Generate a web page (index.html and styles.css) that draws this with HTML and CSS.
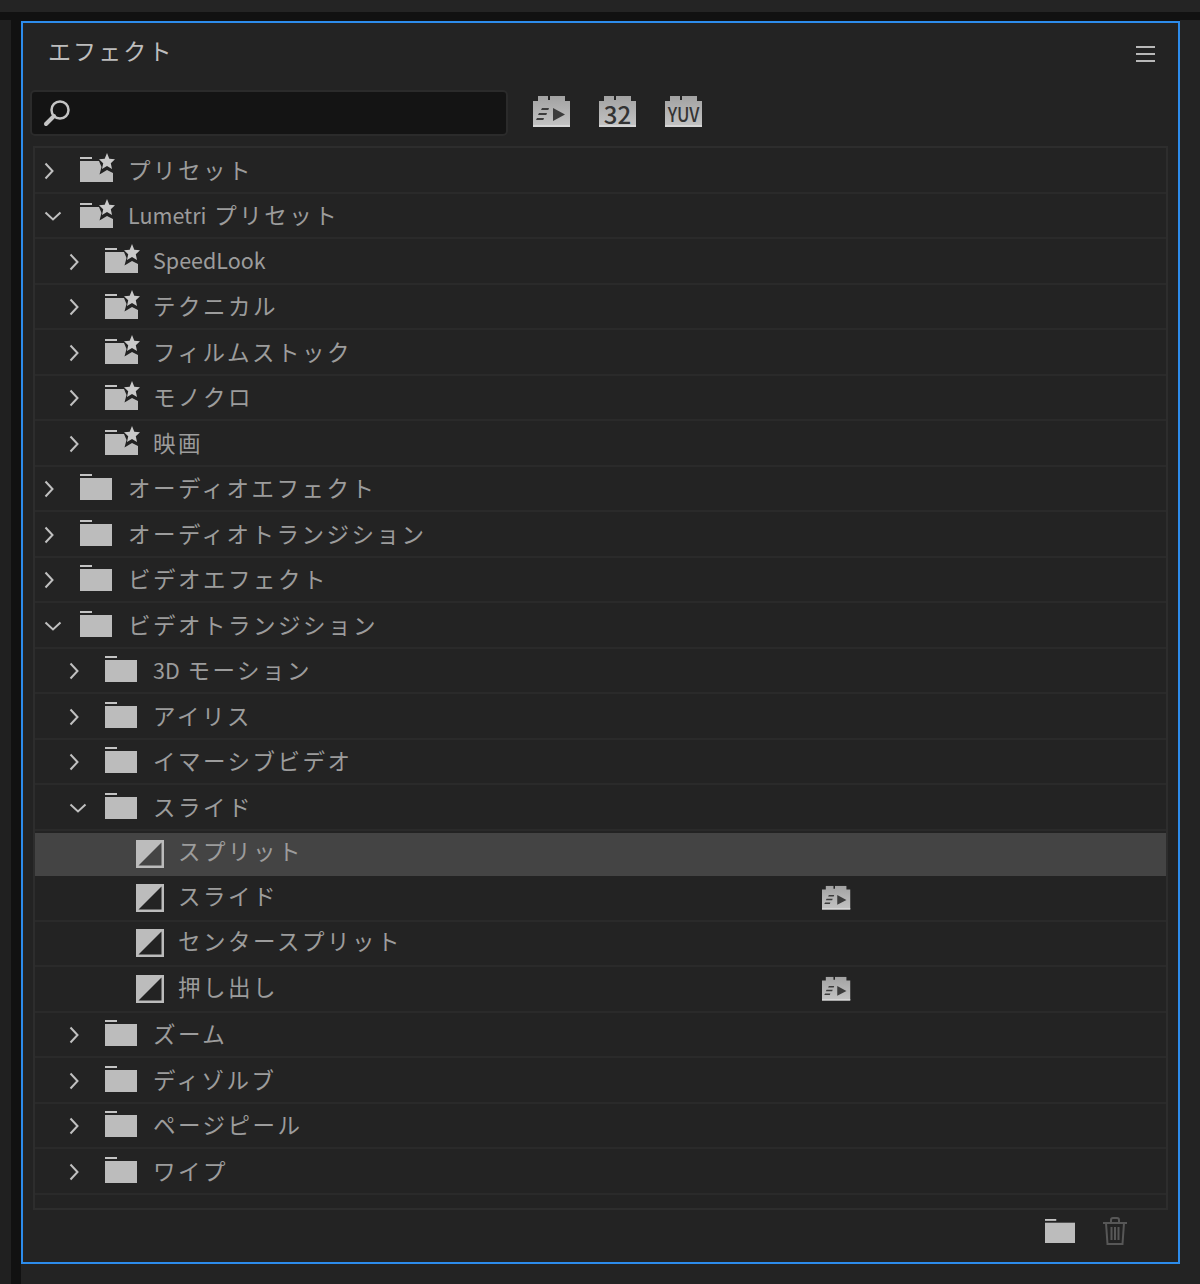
FILE: index.html
```html
<!DOCTYPE html>
<html lang="ja">
<head>
    <meta charset="UTF-8">
    <title>エフェクト</title>
    <link rel="stylesheet" href="styles.css">
</head>
<body>

    <svg class="defs" width="0" height="0">
        <defs>
            <linearGradient id="brick-fill" x1="0" y1="0" x2="0" y2="1">
                <stop offset="0" stop-color="#a2a2a2"/>
                <stop offset="1" stop-color="#c4c4c4"/>
            </linearGradient>
        </defs>
        <symbol id="folder" viewBox="0 0 32 26">
            <rect x="0" y="0" width="12" height="2" fill="#c4c4c4"/>
            <rect x="0" y="4" width="32" height="22" fill="#bcbcbc"/>
        </symbol>
        <symbol id="star-folder" viewBox="0 0 35 29">
            <rect x="0" y="4" width="12" height="2" fill="#c4c4c4"/>
            <path d="M0 8H19L21.500 14L19.500 21.500L27 17L33 20V29H0Z" fill="#bcbcbc"/>
            <path d="M27 0L29.300 5.800L35 6.300L30.800 10.200L32 16L27 13L22 16L23.200 10.200L19 6.300L24.700 5.800Z" fill="#cacaca"/>
        </symbol>
        <symbol id="open" viewBox="0 0 18 10">
            <path d="M1.500 1.500L9 8.500L16.500 1.500" fill="none" stroke="#c0c0c0" stroke-width="2"/>
        </symbol>
        <symbol id="closed" viewBox="0 0 10 18" preserveAspectRatio="xMinYMid meet">
            <path d="M1.500 1.500L8.500 9L1.500 16.500" fill="none" stroke="#c0c0c0" stroke-width="2"/>
        </symbol>
        <symbol id="transition" viewBox="0 0 28 28">
            <rect x="1.250" y="1.250" width="25.500" height="25.500" fill="none" stroke="#bcbcbc" stroke-width="2.500"/>
            <path d="M2 2H26L2 26Z" fill="#bcbcbc"/>
        </symbol>
        <symbol id="brick" viewBox="0 0 38 32">
            <path d="M0 5H5V0H15V4H17V0H32V5H37V31H0Z" fill="url(#brick-fill)"/>
            <path d="M0 29H37V31H0Z" fill="#d6d6d6"/>
        </symbol>
        <symbol id="accel" viewBox="0 0 38 32">
            <use href="#brick"/>
            <path d="M20 12L32 18.500L20 25Z" fill="#3c3c3c"/>
            <path d="M9 12H16L15.300 14H8ZM6 17H14L13.300 19H5ZM4 22H11L10.300 24H3Z" fill="#3c3c3c"/>
        </symbol>
    </svg>

    <div class="topbar"></div>
    <div class="workspace">
        <div class="side"></div>
        <div class="center">
            <main class="panel">
                <header class="panel-head">
                    <h1 class="panel-title">エフェクト</h1>
                    <div class="menu"><i></i><i></i><i></i></div>
                </header>

                <div class="toolbar">
                    <div class="search">
                        <svg class="search-icon" viewBox="0 0 28 28" width="28" height="28">
                            <circle cx="17" cy="11" r="8.500" fill="none" stroke="#c4c4c4" stroke-width="2.500"/>
                            <path d="M11 17L3 25" stroke="#c4c4c4" stroke-width="4" stroke-linecap="round"/>
                        </svg>
                    </div>
                    <div class="badges">
                        <svg class="badge" width="38" height="32"><use href="#accel"/></svg>
                        <div class="badge-text">
                            <svg class="badge" width="38" height="32"><use href="#brick"/></svg>
                            <span class="num">32</span>
                        </div>
                        <div class="badge-text">
                            <svg class="badge" width="38" height="32"><use href="#brick"/></svg>
                            <span class="yuv">YUV</span>
                        </div>
                    </div>
                </div>

                <div class="tree">
                    <div class="row"><svg class="chev"><use href="#closed"/></svg><svg class="star"><use href="#star-folder"/></svg><span class="name">プリセット</span></div>
                    <div class="row"><svg class="chev"><use href="#open"/></svg><svg class="star"><use href="#star-folder"/></svg><span class="name"><span class="lat">Lumetri </span>プリセット</span></div>
                    <div class="row sub"><svg class="chev"><use href="#closed"/></svg><svg class="star"><use href="#star-folder"/></svg><span class="name"><span class="lat">SpeedLook</span></span></div>
                    <div class="row sub"><svg class="chev"><use href="#closed"/></svg><svg class="star"><use href="#star-folder"/></svg><span class="name">テクニカル</span></div>
                    <div class="row sub"><svg class="chev"><use href="#closed"/></svg><svg class="star"><use href="#star-folder"/></svg><span class="name">フィルムストック</span></div>
                    <div class="row sub"><svg class="chev"><use href="#closed"/></svg><svg class="star"><use href="#star-folder"/></svg><span class="name">モノクロ</span></div>
                    <div class="row sub"><svg class="chev"><use href="#closed"/></svg><svg class="star"><use href="#star-folder"/></svg><span class="name">映画</span></div>
                    <div class="row"><svg class="chev"><use href="#closed"/></svg><svg class="fold"><use href="#folder"/></svg><span class="name">オーディオエフェクト</span></div>
                    <div class="row"><svg class="chev"><use href="#closed"/></svg><svg class="fold"><use href="#folder"/></svg><span class="name">オーディオトランジション</span></div>
                    <div class="row"><svg class="chev"><use href="#closed"/></svg><svg class="fold"><use href="#folder"/></svg><span class="name">ビデオエフェクト</span></div>
                    <div class="row"><svg class="chev"><use href="#open"/></svg><svg class="fold"><use href="#folder"/></svg><span class="name">ビデオトランジション</span></div>
                    <div class="row sub"><svg class="chev"><use href="#closed"/></svg><svg class="fold"><use href="#folder"/></svg><span class="name"><span class="lat">3D </span>モーション</span></div>
                    <div class="row sub"><svg class="chev"><use href="#closed"/></svg><svg class="fold"><use href="#folder"/></svg><span class="name">アイリス</span></div>
                    <div class="row sub"><svg class="chev"><use href="#closed"/></svg><svg class="fold"><use href="#folder"/></svg><span class="name">イマーシブビデオ</span></div>
                    <div class="row sub"><svg class="chev"><use href="#open"/></svg><svg class="fold"><use href="#folder"/></svg><span class="name">スライド</span></div>
                    <div class="row leaf selected"><svg class="trans"><use href="#transition"/></svg><span class="name">スプリット</span></div>
                    <div class="row leaf"><svg class="trans"><use href="#transition"/></svg><span class="name">スライド</span><div class="flags"><svg class="flag"><use href="#accel"/></svg></div></div>
                    <div class="row leaf"><svg class="trans"><use href="#transition"/></svg><span class="name">センタースプリット</span></div>
                    <div class="row leaf"><svg class="trans"><use href="#transition"/></svg><span class="name">押し出し</span><div class="flags"><svg class="flag"><use href="#accel"/></svg></div></div>
                    <div class="row sub"><svg class="chev"><use href="#closed"/></svg><svg class="fold"><use href="#folder"/></svg><span class="name">ズーム</span></div>
                    <div class="row sub"><svg class="chev"><use href="#closed"/></svg><svg class="fold"><use href="#folder"/></svg><span class="name">ディゾルブ</span></div>
                    <div class="row sub"><svg class="chev"><use href="#closed"/></svg><svg class="fold"><use href="#folder"/></svg><span class="name">ページピール</span></div>
                    <div class="row sub"><svg class="chev"><use href="#closed"/></svg><svg class="fold"><use href="#folder"/></svg><span class="name">ワイプ</span></div>
                </div>

                <footer class="panel-foot">
                    <svg class="foot-folder" viewBox="0 0 32 26" preserveAspectRatio="none"><use href="#folder"/></svg>
                    <svg class="trash" viewBox="0 0 24 28" width="24" height="28">
                        <path d="M0 6H24M8 5V3Q8 1 10 1H14Q16 1 16 3V5M3 6L4.500 27H19.500L21 6M8.500 10V23M12 10V23M15.500 10V23" fill="none" stroke="#575757" stroke-width="2"/>
                    </svg>
                </footer>
            </main>
            <div class="below"></div>
        </div>
        <div class="right"></div>
    </div>

</body>
</html>
```

FILE: styles.css
```css
html, body { margin: 0; height: 1284px; overflow: hidden; }
body { background: #232323; font-family: "Noto Sans CJK JP", "Noto Sans", sans-serif; color: #9c9c9c; }
.defs { display: block; height: 0; }

.topbar { height: 12px; background: #242424; }
.workspace { display: flex; background: #111; padding-top: 8px; height: 1272px; box-sizing: border-box; }
.side { width: 11px; margin-right: 10px; background: #202020; }
.center { width: 1159px; display: flex; flex-direction: column; padding-top: 1px; }
.below { flex: 1; background: #232323; }
.right { flex: 1; background: #232323; }

.panel { height: 1243px; box-sizing: border-box; border: 2px solid #2d8ceb; background: #232323; padding: 0 11px 0 9px; display: flex; flex-direction: column; }
.panel-head { display: flex; justify-content: space-between; align-items: center; height: 57px; padding: 0 12px 0 16px; }
.panel-title { margin: 0 0 3px; font-size: 23px; font-weight: 400; letter-spacing: 2.1px; color: #bdbdbd; }
.menu { display: flex; flex-direction: column; gap: 5px; width: 19px; margin-top: 4px; }
.menu i { display: block; height: 2px; background: #b8b8b8; }

.toolbar { display: flex; align-items: center; margin-left: -2px; margin-top: 10px; height: 46px; }
.search { width: 478px; height: 46px; box-sizing: border-box; background: #141414; border: 2px solid #2b2b2b; border-radius: 5px; display: flex; align-items: center; padding-left: 11px; }
.badges { display: flex; gap: 28px; margin-left: 25px; margin-top: -2px; }
.badge { display: block; }
.badge-text { position: relative; width: 38px; height: 32px; }
.num, .yuv { position: absolute; inset: 4px 1px 0 0; text-align: center; color: #333; font-weight: 500; line-height: 28px; }
.num { font-size: 24px; }
.yuv { font-size: 20px; transform: scaleX(.85); }

.tree { margin-top: 10px; margin-left: 1px; width: 1135px; height: 1064px; box-sizing: border-box; border: 2px solid #2d2d2d; }
.row { display: flex; align-items: center; height: 45.5px; box-sizing: border-box; border-bottom: 2px solid #2a2a2a; padding-left: 9px; }
.row.sub { padding-left: 34px; }
.row.leaf { padding-left: 101px; }
.row.selected { background: #444; margin-top: 2px; height: 43.5px; border-bottom: 0; }
.chev { width: 18px; height: 18px; margin: 2px 18px 0 0; flex: none; }
.star { width: 35px; height: 29px; margin: 0 13px 4px 0; flex: none; }
.fold { width: 32px; height: 26px; margin: 0 16px 2px 0; flex: none; }
.trans { width: 28px; height: 28px; margin-right: 14px; flex: none; }
.name { flex: 1; font-size: 22.5px; line-height: 30px; letter-spacing: 2.5px; color: #9c9c9c; white-space: nowrap; margin-bottom: 2px; }
.lat { letter-spacing: 0; font-size: 21.5px; margin-right: 3px; }
.leaf .name { margin-bottom: 6px; }
.leaf.selected .name { margin-bottom: 8px; }
.flags { width: 344px; flex: none; display: flex; }
.flag { width: 29px; height: 26px; }

.panel-foot { display: flex; justify-content: flex-end; align-items: center; gap: 28px; height: 42px; padding-right: 40px; }
.foot-folder { width: 30px; height: 24px; }
```
